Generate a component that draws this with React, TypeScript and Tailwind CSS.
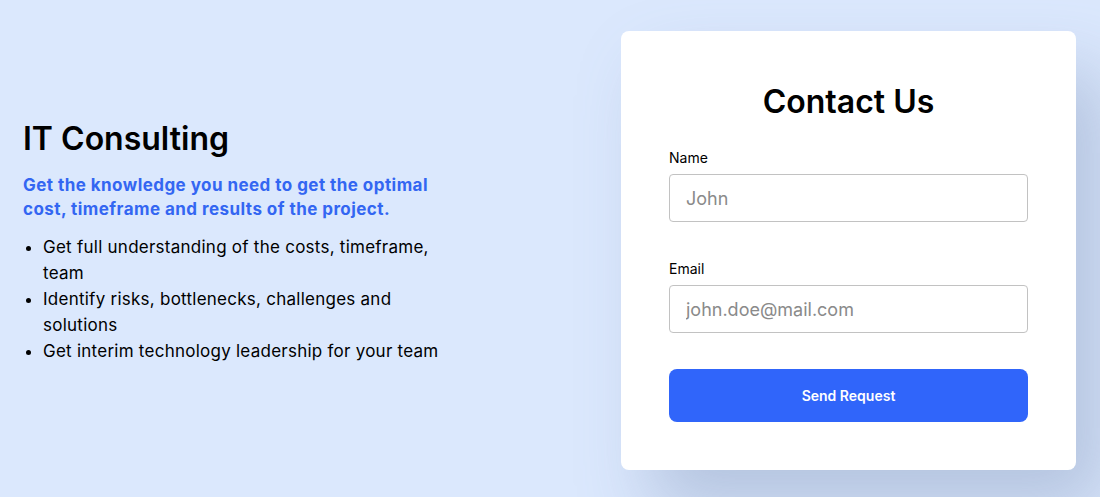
import React from 'react';

const points = [
  'Get full understanding of the costs, timeframe, team',
  'Identify risks, bottlenecks, challenges and solutions',
  'Get interim technology leadership for your team',
];

function Field({ label, placeholder }: { label: string; placeholder: string }) {
  return (
    <div className="flex flex-col gap-1">
      <label className="text-[14px] leading-6 text-black">{label}</label>
      <input
        className="h-12 w-full rounded border border-[#c2c2c2] px-[16px] text-[18px] text-black outline-none placeholder:text-[#8a8a8a]"
        placeholder={placeholder}
      />
    </div>
  );
}

export default function App() {
  return (
    <div
      className="flex h-[497px] w-full items-start justify-between overflow-hidden bg-[#dbe8fd] pl-[23px] pr-[24px] pt-[31px]"
      style={{ fontFamily: 'Inter, "Noto Sans", sans-serif' }}
    >
      <div className="mt-[88px] w-[440px]">
        <h1 className="text-[32px] font-semibold leading-10 text-black">IT Consulting</h1>
        <p className="mt-[14px] w-[420px] text-[17px] font-bold leading-6 tracking-[0.45px] text-[#3366f2]">
          Get the knowledge you need to get the optimal cost, timeframe and results of the project.
        </p>
        <ul className="mt-[13px] list-disc pl-[20px] text-[17px] leading-[26px] tracking-[0.25px] text-black">
          {points.map((p) => (
            <li key={p}>{p}</li>
          ))}
        </ul>
      </div>

      <div className="w-[455px] rounded-lg bg-white px-12 pb-12 pt-[51px] shadow-[30px_40px_70px_rgba(110,130,170,0.35)]">
        <h2 className="text-center text-[32px] font-semibold leading-10 text-black">Contact Us</h2>
        <form className="mt-[24px] flex flex-col" onSubmit={(e) => e.preventDefault()}>
          <Field label="Name" placeholder="John" />
          <div className="mt-[35px]">
            <Field label="Email" placeholder="john.doe@mail.com" />
          </div>
          <button
            type="submit"
            className="mt-9 h-[53px] w-full rounded-lg bg-[#3065fa] text-[14px] font-semibold text-white"
          >
            Send Request
          </button>
        </form>
      </div>
    </div>
  );
}
